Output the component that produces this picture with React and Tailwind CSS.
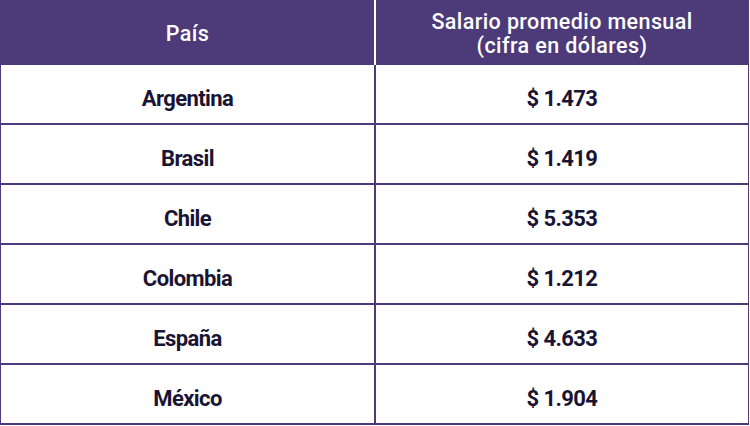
export default function App() {
  const rows = [
    ["Argentina", "$ 1.473"],
    ["Brasil", "$ 1.419"],
    ["Chile", "$ 5.353"],
    ["Colombia", "$ 1.212"],
    ["España", "$ 4.633"],
    ["México", "$ 1.904"],
  ];
  return (
    <div className="w-[750px] h-[426px] bg-white" style={{ fontFamily: "Roboto, 'Liberation Sans', sans-serif" }}>
      <div className="w-[749px] border-l border-r border-[#4d3a79]">
        <div className="flex h-[65px] bg-[#4d3a79] text-white font-medium text-[21.5px] leading-[24px] tracking-[0.4px]">
          <div className="w-[375px] flex items-center justify-center border-r-2 border-white pt-[3px]">País</div>
          <div className="flex-1 flex flex-col items-center justify-center pt-[3px]">
            <span>Salario promedio mensual</span>
            <span>(cifra en dólares)</span>
          </div>
        </div>
        {rows.map(([c, v]) => (
          <div key={c} className="flex h-[60px] border-b-2 border-[#4d3a79] text-[#1a1434] font-bold text-[22px] tracking-[-0.6px]">
            <div className="w-[375px] flex items-center justify-center border-r-2 border-[#4d3a79] pt-[8px]">{c}</div>
            <div className="flex-1 flex items-center justify-center pt-[8px]">{v}</div>
          </div>
        ))}
      </div>
    </div>
  );
}
